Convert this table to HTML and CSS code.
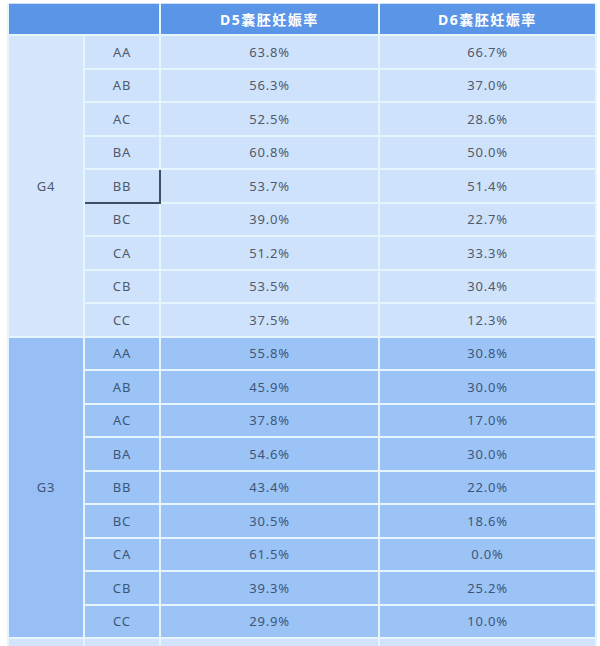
FILE: index.html
```html
<!DOCTYPE html>
<html lang="zh">
<head>
<meta charset="utf-8">
<link rel="stylesheet" href="styles.css">
</head>
<body>
<table class="grid">
  <colgroup>
    <col class="c-grade"><col class="c-sub"><col class="c-d5"><col class="c-d6">
  </colgroup>
  <thead>
    <tr class="head">
      <th colspan="2"></th>
      <th>D5囊胚妊娠率</th>
      <th>D6囊胚妊娠率</th>
    </tr>
  </thead>
  <tbody class="g4">
    <tr><td class="grade" rowspan="9">G4</td><td>AA</td><td>63.8%</td><td>66.7%</td></tr>
    <tr><td>AB</td><td>56.3%</td><td>37.0%</td></tr>
    <tr><td>AC</td><td>52.5%</td><td>28.6%</td></tr>
    <tr><td>BA</td><td>60.8%</td><td>50.0%</td></tr>
    <tr><td class="picked">BB</td><td>53.7%</td><td>51.4%</td></tr>
    <tr><td>BC</td><td>39.0%</td><td>22.7%</td></tr>
    <tr><td>CA</td><td>51.2%</td><td>33.3%</td></tr>
    <tr><td>CB</td><td>53.5%</td><td>30.4%</td></tr>
    <tr><td>CC</td><td>37.5%</td><td>12.3%</td></tr>
  </tbody>
  <tbody class="g3">
    <tr><td class="grade" rowspan="9">G3</td><td>AA</td><td>55.8%</td><td>30.8%</td></tr>
    <tr><td>AB</td><td>45.9%</td><td>30.0%</td></tr>
    <tr><td>AC</td><td>37.8%</td><td>17.0%</td></tr>
    <tr><td>BA</td><td>54.6%</td><td>30.0%</td></tr>
    <tr><td>BB</td><td>43.4%</td><td>22.0%</td></tr>
    <tr><td>BC</td><td>30.5%</td><td>18.6%</td></tr>
    <tr><td>CA</td><td>61.5%</td><td>0.0%</td></tr>
    <tr><td>CB</td><td>39.3%</td><td>25.2%</td></tr>
    <tr><td>CC</td><td>29.9%</td><td>10.0%</td></tr>
  </tbody>
  <tbody class="g2">
    <tr><td class="grade"></td><td></td><td></td><td></td></tr>
  </tbody>
</table>
</body>
</html>
```
FILE: styles.css
```css
html, body {
  margin: 0;
  padding: 0;
  background: #ffffff;
}
body {
  padding: 3px 0 0 7px;
  font-family: "Noto Sans", "Noto Sans CJK SC", sans-serif;
}
.grid {
  border-collapse: collapse;
  table-layout: fixed;
  width: 588px;
  font-size: 13px;
  letter-spacing: 0.8px;
}
.c-grade { width: 76px; }
.c-sub { width: 76px; }
.c-d5 { width: 219px; }
.c-d6 { width: 217px; }
.grid th, .grid td {
  border: 2px solid #e6f4fc;
  text-align: center;
  padding: 0;
}
.head th {
  height: 30px;
  background: #5b95e7;
  color: #ffffff;
  font-weight: bold;
  font-size: 14px;
  letter-spacing: 1.5px;
  border-color: #5b95e7 #e6f4fc #e6f4fc #e6f4fc;
  border-top: 1px solid #cfe0f2;
}
.grid tbody tr { height: 33.5px; }
.g4 td {
  background: #cfe2fb;
  color: #505a6b;
}
.g4 td.grade { background: #d5e6fc; }
.g4 td.picked {
  border-right: 2px solid #3f4d60;
  border-bottom: 2px solid #3f4d60;
}
.g3 td {
  background: #9cc3f6;
  color: #3d5678;
}
.g3 td.grade { background: #97bef5; }
.g2 td {
  background: #d2e4fb;
}
```
